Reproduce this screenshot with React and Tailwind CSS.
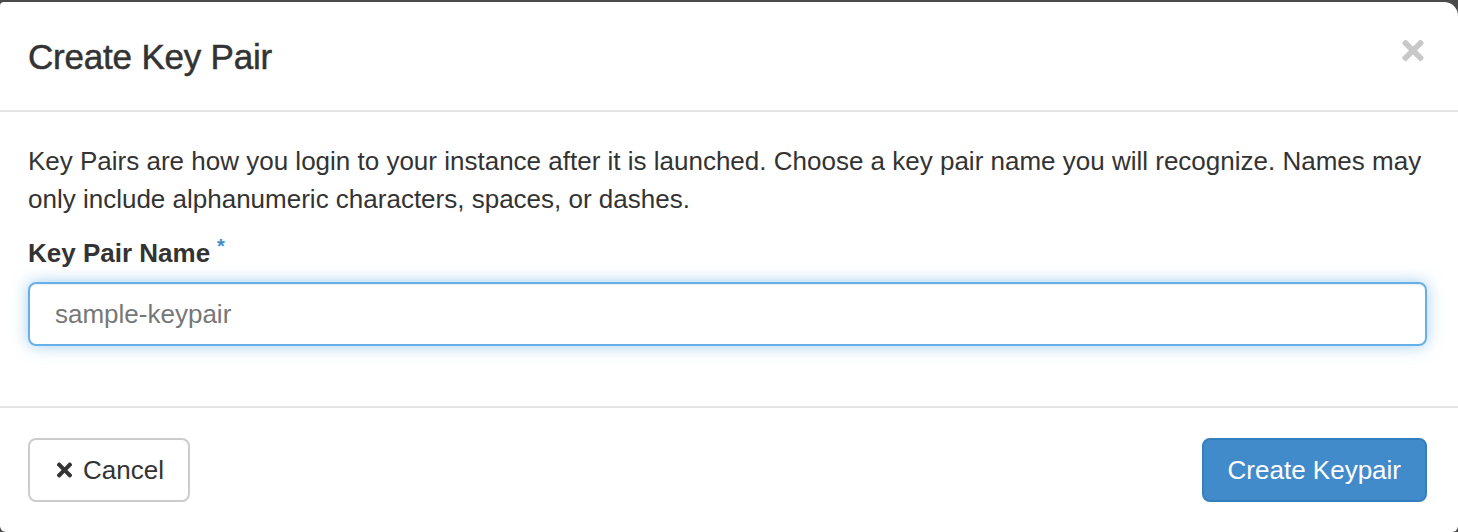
import React from 'react'
import { FaTimes } from 'react-icons/fa'

export default function App() {
  return (
    <div className="w-[1458px] h-[532px] bg-[#4a4a4a] pt-[2px] overflow-hidden font-['Liberation_Sans',Arial,sans-serif] text-[#333]">
      <div className="h-full bg-white rounded-tl-[4px] rounded-tr-[14px] rounded-b-[6px] flex flex-col">
        {/* header */}
        <div className="flex items-center justify-between pl-[28px] pr-[31px] pt-[30px] pb-[29px] border-b-2 border-[#e5e5e5]">
          <h4 className="text-[35px] leading-[49px] font-medium tracking-[-0.2px] [-webkit-text-stroke:0.5px_#333]">Create Key Pair</h4>
          <button className="text-[#c8c8c8] -mt-[12px]">
            <FaTimes className="w-[28px] h-[31px]" />
          </button>
        </div>

        {/* body */}
        <div className="pl-[28px] pr-[31px] pt-[30px] pb-[60px]">
          <p className="text-[26px] leading-[38px] mb-[16px]">
            Key Pairs are how you login to your instance after it is launched. Choose a key pair name you will recognize. Names may only include alphanumeric characters, spaces, or dashes.
          </p>
          <label className="flex items-start text-[26px] leading-[38px] font-bold mb-[10px]">
            Key Pair Name
            <span className="text-[#428bca] text-[20px] leading-[20px] ml-[7px] mt-[2px]">*</span>
          </label>
          <input
            className="block w-full h-[64px] px-[25px] text-[26px] text-[#555] placeholder:text-[#777] border-2 border-[#66afe9] rounded-[8px] outline-none shadow-[inset_0_1px_1px_rgba(0,0,0,0.075),0_0_16px_rgba(102,175,233,0.6)]"
            placeholder="sample-keypair"
          />
        </div>

        {/* footer */}
        <div className="flex items-start justify-between pl-[28px] pr-[31px] pt-[30px] border-t-2 border-[#e5e5e5] flex-1">
          <button className="flex items-center gap-[9px] h-[64px] pl-[25px] pr-[24px] border-2 border-[#ccc] rounded-[8px] bg-white text-[26px] text-[#333]">
            <FaTimes className="w-[19px] h-[22px]" />
            Cancel
          </button>
          <button className="h-[64px] px-[24px] border-2 border-[#357ebd] rounded-[8px] bg-[#428bca] text-[26px] text-white">
            Create Keypair
          </button>
        </div>
      </div>
    </div>
  )
}
